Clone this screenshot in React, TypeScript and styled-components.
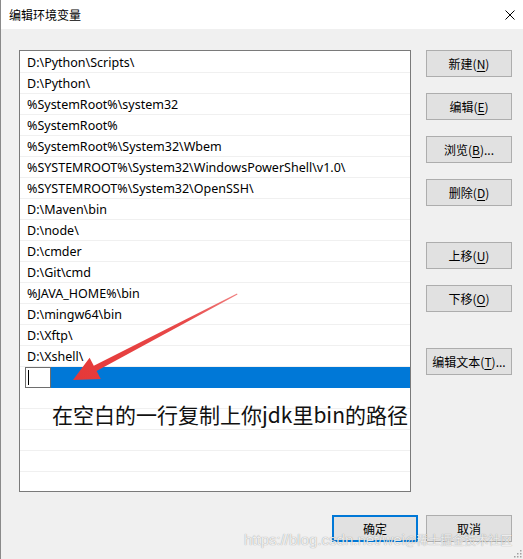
import * as React from "react";
import styled, { createGlobalStyle } from "styled-components";

const GlobalStyle = createGlobalStyle`
    html, body {
        margin: 0;
        padding: 0;
        background: #f0f0f0;
    }
    body {
        font-family: "Noto Sans", "Noto Sans CJK SC", sans-serif;
        font-size: 12px;
        color: #000;
    }
`;

const paths = [
    "D:\\Python\\Scripts\\",
    "D:\\Python\\",
    "%SystemRoot%\\system32",
    "%SystemRoot%",
    "%SystemRoot%\\System32\\Wbem",
    "%SYSTEMROOT%\\System32\\WindowsPowerShell\\v1.0\\",
    "%SYSTEMROOT%\\System32\\OpenSSH\\",
    "D:\\Maven\\bin",
    "D:\\node\\",
    "D:\\cmder",
    "D:\\Git\\cmd",
    "%JAVA_HOME%\\bin",
    "D:\\mingw64\\bin",
    "D:\\Xftp\\",
    "D:\\Xshell\\",
];

const EMPTY_ROWS = 5;

const Window = styled.div`
    position: relative;
    width: 523px;
    height: 559px;
    box-sizing: border-box;
    border-left: 1px solid #8a8a8a;
    background: #f0f0f0;
    display: flex;
    flex-direction: column;
    overflow: hidden;
`;

const TitleBar = styled.div`
    height: 29px;
    flex-shrink: 0;
    background: #ffffff;
    display: flex;
    align-items: center;
    justify-content: space-between;
    padding: 0 7px 0 8px;
`;

const Title = styled.span`
    font-family: "Noto Sans CJK SC", sans-serif;
    font-size: 12px;
    margin-top: -1px;
`;

const CloseIcon = styled.svg`
    width: 10px;
    height: 10px;
    margin-right: 1px;
`;

const Body = styled.div`
    display: flex;
    padding: 21px 0 0 18px;
    gap: 15px;
`;

const ListBox = styled.div`
    position: relative;
    width: 392px;
    height: 442px;
    box-sizing: border-box;
    border: 1px solid #7a7a7a;
    background: #ffffff;
    padding-top: 1px;
    overflow: hidden;
`;

const Row = styled.div`
    height: 21px;
    box-sizing: border-box;
    border-bottom: 1px solid #f0f0f0;
    display: flex;
    align-items: center;
    padding-left: 7px;
    font-size: 12.5px;
    white-space: nowrap;
`;

const EditRow = styled.div`
    height: 21px;
    display: flex;
    padding-left: 5px;
    background: #ffffff;
`;

const EditBox = styled.div`
    width: 26px;
    box-sizing: border-box;
    border: 1px solid #6e6e6e;
    background: #ffffff;
    display: flex;
    align-items: center;
    padding-left: 2px;
`;

const Caret = styled.div`
    width: 1px;
    height: 15px;
    background: #000;
`;

const Selection = styled.div`
    flex: 1;
    background: #0078d7;
`;

const Annotation = styled.div`
    position: absolute;
    left: 32px;
    top: 349px;
    font-family: "Noto Sans CJK SC", sans-serif;
    font-size: 21px;
    line-height: 28px;
    color: #111;
    white-space: nowrap;
`;

const Arrow = styled.svg`
    position: absolute;
    left: 0;
    top: 0;
    width: 392px;
    height: 442px;
    pointer-events: none;
`;

const ButtonColumn = styled.div`
    display: flex;
    flex-direction: column;
`;

const WinButton = styled.button<{ $gap?: number; $primary?: boolean }>`
    width: 86px;
    height: 27px;
    margin-top: ${(p) => p.$gap ?? 0}px;
    box-sizing: border-box;
    background: #e1e1e1;
    border: ${(p) => (p.$primary ? "2px solid #0078d7" : "1px solid #adadad")};
    font-family: "Noto Sans CJK SC", sans-serif;
    font-size: 12px;
    color: #000;
    padding: 0;
    display: flex;
    align-items: center;
    justify-content: center;
`;

const Key = styled.span`
    text-decoration: underline;
    text-underline-offset: 2px;
`;

const Footer = styled.div`
    display: flex;
    justify-content: flex-end;
    gap: 8px;
    padding: 23px 11px 0 0;
`;

const Watermark = styled.div`
    position: absolute;
    left: 243px;
    top: 531px;
    display: flex;
    align-items: baseline;
    color: rgba(255, 255, 255, 0.85);
    text-shadow: 0 0 1px rgba(0, 0, 0, 0.45);
    white-space: nowrap;
    pointer-events: none;
`;

const WatermarkUrl = styled.span`
    font-family: "Liberation Sans", sans-serif;
    font-size: 15px;
`;

const WatermarkSite = styled.span`
    font-family: "Noto Sans CJK SC", sans-serif;
    font-size: 12px;
`;

const Grip = styled.svg`
    position: absolute;
    right: 1px;
    bottom: 1px;
    width: 10px;
    height: 10px;
`;

function Label({ text, hotkey, suffix = "" }: { text: string; hotkey: string; suffix?: string }): JSX.Element {
    return (
        <span>
            {text}(<Key>{hotkey}</Key>){suffix}
        </span>
    );
}

export default function App(): JSX.Element {
    return (
        <>
            <GlobalStyle />
            <Window>
                <TitleBar>
                    <Title>编辑环境变量</Title>
                    <CloseIcon viewBox="0 0 10 10">
                        <path d="M0.5 0.5 L9.5 9.5 M9.5 0.5 L0.5 9.5" stroke="#000" strokeWidth="1" />
                    </CloseIcon>
                </TitleBar>
                <Body>
                    <ListBox>
                        {paths.map((p) => (
                            <Row key={p}>{p}</Row>
                        ))}
                        <EditRow>
                            <EditBox>
                                <Caret />
                            </EditBox>
                            <Selection />
                        </EditRow>
                        {Array.from({ length: EMPTY_ROWS }, (_, i) => (
                            <Row key={"empty" + i} />
                        ))}
                        <Annotation>在空白的一行复制上你jdk里bin的路径</Annotation>
                        <Arrow viewBox="0 0 392 442">
                            <defs>
                                <linearGradient id="arrowFill" x1="217" y1="243" x2="53" y2="329" gradientUnits="userSpaceOnUse">
                                    <stop offset="0" stopColor="#f08080" />
                                    <stop offset="0.3" stopColor="#e84a4a" />
                                    <stop offset="1" stopColor="#e53838" />
                                </linearGradient>
                            </defs>
                            <polygon
                                points="217,242.6 217.5,243.6 76.6,320.1 80.8,328.1 53,329 69.6,306.7 73.8,314.7"
                                fill="url(#arrowFill)"
                            />
                        </Arrow>
                    </ListBox>
                    <ButtonColumn>
                        <WinButton>
                            <Label text="新建" hotkey="N" />
                        </WinButton>
                        <WinButton $gap={16}>
                            <Label text="编辑" hotkey="E" />
                        </WinButton>
                        <WinButton $gap={16}>
                            <Label text="浏览" hotkey="B" suffix="..." />
                        </WinButton>
                        <WinButton $gap={16}>
                            <Label text="删除" hotkey="D" />
                        </WinButton>
                        <WinButton $gap={36}>
                            <Label text="上移" hotkey="U" />
                        </WinButton>
                        <WinButton $gap={16}>
                            <Label text="下移" hotkey="O" />
                        </WinButton>
                        <WinButton $gap={36}>
                            <Label text="编辑文本" hotkey="T" suffix="..." />
                        </WinButton>
                    </ButtonColumn>
                </Body>
                <Footer>
                    <WinButton $primary>确定</WinButton>
                    <WinButton>取消</WinButton>
                </Footer>
                <Watermark>
                    <WatermarkUrl>https://blog.csdn.net/wei</WatermarkUrl>
                    <WatermarkSite>@稀土掘金技术社区</WatermarkSite>
                </Watermark>
                <Grip viewBox="0 0 10 10">
                    {[
                        [8, 2],
                        [5, 5],
                        [8, 5],
                        [2, 8],
                        [5, 8],
                        [8, 8],
                    ].map(([x, y]) => (
                        <rect key={`${x}-${y}`} x={x} y={y} width="1.5" height="1.5" fill="#a0a0a0" />
                    ))}
                </Grip>
            </Window>
        </>
    );
}
